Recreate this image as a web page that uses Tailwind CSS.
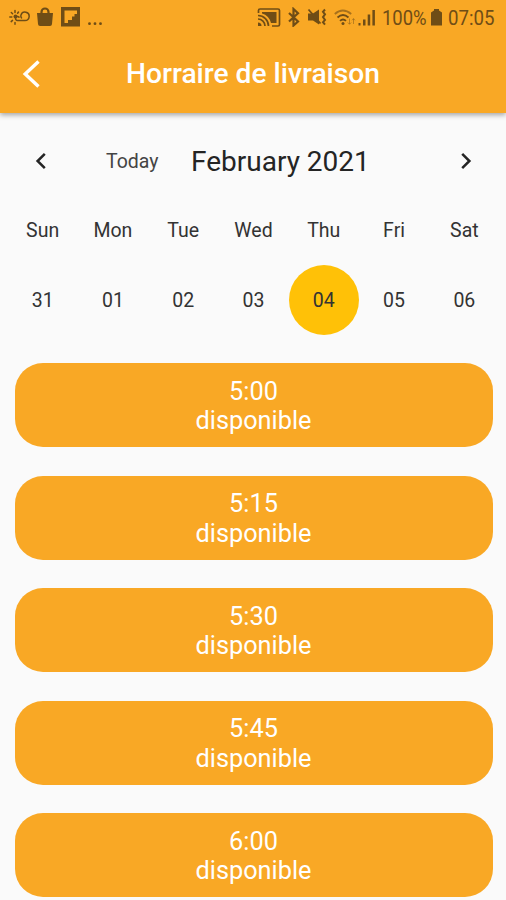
<!DOCTYPE html>
<html lang="fr">
  <head>
    <meta charset="UTF-8" />
    <meta name="viewport" content="width=device-width, initial-scale=1.0" />
    <title>Horraire de livraison</title>
    <script src="https://cdn.jsdelivr.net/npm/@tailwindcss/browser@4"></script>
  </head>
  <body class="h-[900px] overflow-hidden bg-[#fafafa] font-['Roboto',sans-serif] text-[#242424]">
    <!-- status bar + app bar -->
    <header class="h-[113px] bg-[#f9a825] shadow-[0_2px_5px_rgba(0,0,0,0.35)]">
      <div class="flex h-[34px] justify-between pl-[9px] pr-[11px] pt-[7px] text-[#6f4d16]">
        <div class="flex">
          <!-- weather -->
          <svg class="h-5 w-[21px]" viewBox="0 0 21 20" fill="none" stroke="currentColor" stroke-width="1.5" stroke-linecap="round">
            <path d="M8.500 13.500h7.500a4.200 4.200 0 1 0-4-5.600q-.5 1.600.5 3M8.500 13.500a2 2 0 1 1 1.500-3.400" />
            <path d="M6 3.500v2M2.300 5.500l1.300 1.200M.8 10h2M2.200 14.600l1.300-1.200M6 15.500v1.800M9.500 5l-.9 1.200" />
            <circle cx="6.500" cy="9.500" r="2" fill="currentColor" stroke="none" />
          </svg>
          <!-- bag -->
          <svg class="ml-[7px] h-5 w-4" viewBox="0 0 16 20" fill="currentColor">
            <path d="M0 6h16l-1 11q-.2 2-2 2H3q-1.800 0-2-2z" />
            <path d="M4.500 8V5a3.500 3.500 0 0 1 7 0v3" fill="none" stroke="currentColor" stroke-width="2.200" />
          </svg>
          <!-- flipboard -->
          <svg class="ml-2 h-5 w-[19px]" viewBox="0 0 19 20" fill="currentColor">
            <path fill-rule="evenodd" d="M0 0h19.500v19.500H0zM3.500 3.500v12.500H7v-3h4v-3.500h2.500V7H16V3.500z" />
          </svg>
          <svg class="ml-2 h-5 w-4" viewBox="0 0 16 20" fill="currentColor">
            <circle cx="1.500" cy="16.700" r="1.400" />
            <circle cx="7" cy="16.700" r="1.400" />
            <circle cx="12.500" cy="16.700" r="1.400" />
          </svg>
        </div>
        <div class="flex">
          <!-- cast -->
          <svg class="h-5 w-6" viewBox="0 0 24 20" fill="none" stroke="currentColor" stroke-width="1.700">
            <path d="M1.500 6V3.500Q1.500 2 3 2h18q1.500 0 1.500 1.500v14q0 1.500-1.500 1.500h-6" />
            <path d="M1 8.500A10.500 10.500 0 0 1 11.500 19M1 12a7 7 0 0 1 7 7" />
            <path d="M1 15.500A3.500 3.500 0 0 1 4.500 19H1z" fill="currentColor" stroke="none" />
            <path d="M5 5h14.500v11H14Q12 8.500 5 6.500z" fill="currentColor" stroke="none" />
          </svg>
          <!-- bluetooth -->
          <svg class="ml-[7px] h-5 w-3" viewBox="0 0 12 20" fill="none" stroke="currentColor" stroke-width="2.200">
            <path d="M1 6l9 8.500-4.500 4V2L10 6.200 1 14.500" />
          </svg>
          <!-- muted, vibrate -->
          <svg class="ml-[7px] h-5 w-5" viewBox="0 0 20 20">
            <path d="M1 6.500h5L12 2.500v15l-6-4H1z" fill="currentColor" />
            <path d="M1.500 2.500L13.500 16.500" fill="none" stroke="currentColor" stroke-width="1.800" />
            <path d="M18 2.500l-2 2.300 2 2.500-2 2.800 2 2.800-2 2.300 2 2.500" fill="none" stroke="currentColor" stroke-width="2" />
          </svg>
          <!-- wifi -->
          <svg class="ml-[7px] h-5 w-[22px]" viewBox="0 0 22 20" fill="none" stroke="currentColor" stroke-width="1.800">
            <path d="M.8 7q8-7 16.400 0" opacity=".6" />
            <path d="M3.500 10.500q5.500-5 11 0M6 13.800q3-2.700 6 0" />
            <circle cx="9" cy="16.500" r="1.500" fill="currentColor" stroke="none" />
            <path d="M15.500 11.500V17M13.800 15.500l1.700 1.800 1.700-1.800M19.500 17v-5.500M18 13.300l1.500-1.600 1.500 1.600" stroke-width="1" opacity=".45" />
          </svg>
          <!-- signal -->
          <svg class="ml-[2px] h-5 w-[18px]" viewBox="0 0 18 20" fill="currentColor">
            <path d="M.5 16h2v2.500h-2zM5 12.500h2.500v6H5zM9.700 7.500h2.500v11H9.700zM14.400 3h2.500v15.500h-2.500z" />
          </svg>
          <span class="ml-[6px] w-[46px] origin-left scale-x-[.9] whitespace-nowrap text-[20.500px] leading-[22px]">100%</span>
          <!-- battery -->
          <svg class="ml-[3px] h-5 w-[11px]" viewBox="0 0 11 20" fill="currentColor">
            <path d="M3 2h5v1.500l3 2V18.500H0V5.500l3-2z" />
          </svg>
          <span class="ml-[6px] w-[47px] origin-left scale-x-[.91] whitespace-nowrap text-[20.500px] leading-[22px]">07:05</span>
        </div>
      </div>
      <div class="relative flex h-[79px] items-center justify-center pt-[2px] text-white">
        <svg class="absolute left-[22px] top-[25px] h-[30px] w-5" viewBox="0 0 20 30" fill="none" stroke="currentColor" stroke-width="3.400">
          <path d="M16.500 2.500L3.200 15l13.300 12.500" />
        </svg>
        <h1 class="text-[28.200px] font-medium leading-none">Horraire de livraison</h1>
      </div>
    </header>

    <!-- month navigation -->
    <div class="flex h-[82px] items-center pl-[35px] pr-[34px] pt-[14px]">
      <svg class="h-[18px] w-3" viewBox="0 0 12 18" fill="none" stroke="currentColor" stroke-width="2.500">
        <path d="M9.800 1.800L2.600 9l7.200 7.200" />
      </svg>
      <span class="ml-[59px] w-[85px] pt-[2px] text-[19.500px] leading-none text-[#444]">Today</span>
      <span class="whitespace-nowrap pt-[2px] text-[28px] leading-none">February 2021</span>
      <svg class="ml-auto h-[18px] w-3" viewBox="0 0 12 18" fill="none" stroke="currentColor" stroke-width="2.500">
        <path d="M2.200 1.800L9.400 9l-7.200 7.200" />
      </svg>
    </div>

    <div class="grid auto-rows-[70px] grid-cols-7 pl-[7.500px] pr-[6.500px] text-center text-[19.500px] leading-[71px] text-[#333]">
      <span>Sun</span>
      <span>Mon</span>
      <span>Tue</span>
      <span>Wed</span>
      <span>Thu</span>
      <span>Fri</span>
      <span>Sat</span>
      <span>31</span>
      <span>01</span>
      <span>02</span>
      <span>03</span>
      <span class="rounded-full bg-[#ffc107]">04</span>
      <span>05</span>
      <span>06</span>
    </div>

    <!-- delivery slots -->
    <main class="flex flex-col gap-[28.500px] pl-[14.500px] pr-[13.500px] pt-[28.300px] text-center text-[25.300px] leading-[29.500px] text-white">
      <button class="h-[84px] shrink-0 rounded-[28px] bg-[#f9a825] pt-[2px]">5:00<br />disponible</button>
      <button class="h-[84px] shrink-0 rounded-[28px] bg-[#f9a825] pt-[2px]">5:15<br />disponible</button>
      <button class="h-[84px] shrink-0 rounded-[28px] bg-[#f9a825] pt-[2px]">5:30<br />disponible</button>
      <button class="h-[84px] shrink-0 rounded-[28px] bg-[#f9a825] pt-[2px]">5:45<br />disponible</button>
      <button class="h-[84px] shrink-0 rounded-[28px] bg-[#f9a825] pt-[2px]">6:00<br />disponible</button>
    </main>
  </body>
</html>
